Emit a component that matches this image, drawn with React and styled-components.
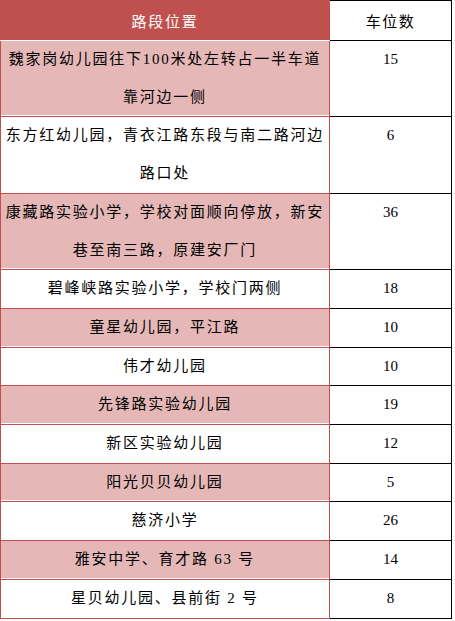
import React from "react"
import styled, { createGlobalStyle } from "styled-components"

const RED = "#C0504D"
const PINK = "#E5B8B7"

const rows = [
  { place: ["魏家岗幼儿园往下100米处左转占一半车道", "靠河边一侧"], count: 15 },
  { place: ["东方红幼儿园，青衣江路东段与南二路河边", "路口处"], count: 6 },
  { place: ["康藏路实验小学，学校对面顺向停放，新安", "巷至南三路，原建安厂门"], count: 36 },
  { place: ["碧峰峡路实验小学，学校门两侧"], count: 18 },
  { place: ["童星幼儿园，平江路"], count: 10 },
  { place: ["伟才幼儿园"], count: 10 },
  { place: ["先锋路实验幼儿园"], count: 19 },
  { place: ["新区实验幼儿园"], count: 12 },
  { place: ["阳光贝贝幼儿园"], count: 5 },
  { place: ["慈济小学"], count: 26 },
  { place: ["雅安中学、育才路 63 号"], count: 14 },
  { place: ["星贝幼儿园、县前街 2 号"], count: 8 },
]

const GlobalStyle = createGlobalStyle`
  html, body {
    margin: 0;
    padding: 0;
    background: #fff;
  }
`

const Table = styled.table`
  border-collapse: collapse;
  table-layout: fixed;
  width: 452px;
  font-family: "Liberation Serif", "Noto Sans CJK SC", serif;
  font-size: 15px;
  color: #000;
`

const HeadPlace = styled.th`
  width: 328px;
  height: 39px;
  padding: 0;
  background: ${RED};
  color: #fff;
  font-weight: normal;
  letter-spacing: 1.7px;
  text-align: center;
  border-top: 1px solid ${RED};
  border-left: 1px solid ${RED};
  border-right: 1px solid ${RED};
  border-bottom: 1px solid #fff;
`

const HeadCount = styled.th`
  height: 39px;
  padding: 0;
  font-weight: normal;
  letter-spacing: 1.5px;
  text-align: center;
  border-top: 1px solid #000;
  border-right: 1px solid #000;
  border-bottom: 1px solid #000;
`

const PlaceCell = styled.td`
  padding: 0 4px;
  background: ${(p) => (p.$shaded ? PINK : "#fff")};
  box-shadow: ${(p) => (p.$shaded ? "inset 0 -1px 0 #fff" : "none")};
  border-left: 1px solid ${RED};
  border-right: 1px solid ${RED};
  border-bottom: 1px solid ${RED};
  text-align: center;
  vertical-align: top;
  letter-spacing: 1.75px;
`

const Line = styled.div`
  line-height: 37.7px;
  white-space: nowrap;
`

const CountCell = styled.td`
  padding: 0;
  border-right: 1px solid #000;
  border-bottom: 1px solid #000;
  text-align: center;
  vertical-align: top;
  line-height: 37.7px;
`

const App = () => {
  return (
    <>
      <GlobalStyle />
      <Table>
        <thead>
          <tr>
            <HeadPlace>路段位置</HeadPlace>
            <HeadCount>车位数</HeadCount>
          </tr>
        </thead>
        <tbody>
          {rows.map((row, i) => (
            <tr key={i}>
              <PlaceCell $shaded={i % 2 === 0}>
                {row.place.map((line) => (
                  <Line key={line}>{line}</Line>
                ))}
              </PlaceCell>
              <CountCell>{row.count}</CountCell>
            </tr>
          ))}
        </tbody>
      </Table>
    </>
  )
}

export default App
